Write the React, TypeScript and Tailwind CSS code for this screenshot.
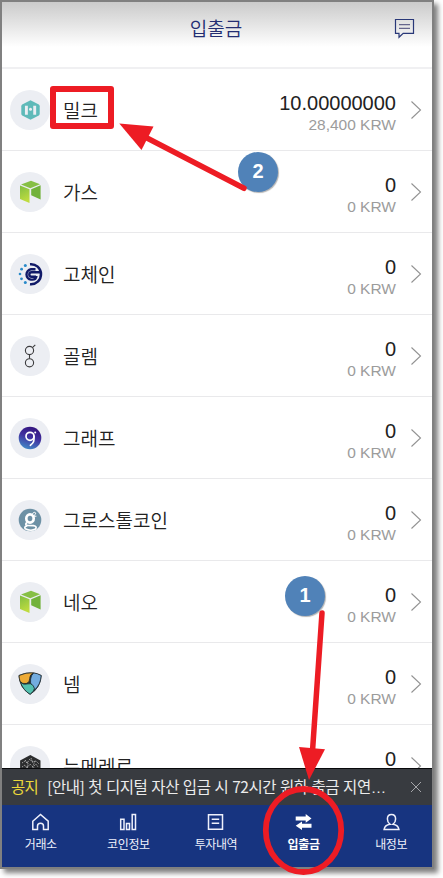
import type { ReactNode } from 'react';

const Milk = () => (
  <svg width="40" height="40" viewBox="0 0 40 40">
    <path d="M20.500 10.200l8.300 4.300q.9.600.9 1.800v7.400q0 1.200-.9 1.800l-8.300 4.300-8.300-4.300q-.9-.6-.9-1.800v-7.400q0-1.200.9-1.800z" fill="#5fbab9" />
    <path d="M16.400 15.700v9M24.700 15.700v9" stroke="#eceef3" strokeWidth="2.900" />
    <circle cx="20.500" cy="19.200" r="1.500" fill="#eceef3" />
  </svg>
);

const Neo = ({ id }: { id: string }) => (
  <svg width="40" height="40" viewBox="0 0 40 40">
    <defs>
      <linearGradient id={id} x1="0" y1="0" x2="0.3" y2="1">
        <stop offset="0" stopColor="#7fbd42" />
        <stop offset="1" stopColor="#bfdc3f" />
      </linearGradient>
    </defs>
    <path d="M10 13.400l9.500 3.800v13.800l-9.500-4z" fill={`url(#${id})`} />
    <path d="M11 12.600l10-3.800 9 3.400-9.700 4.100z" fill="#86bf45" />
    <path d="M21.200 17.300l9.400-4v14.200l-9.400-4.200z" fill="#72b23b" />
  </svg>
);

const GoChain = () => (
  <svg width="40" height="40" viewBox="0 0 40 40" fill="none">
    <path d="M20 10.200A10 10 0 0 1 31 20A10 10 0 0 1 20 30.200" stroke="#111a68" strokeWidth="2.500" />
    <path d="M30.500 18.300H21.500a2.200 2.200 0 0 0 0 4.400h4.500M25.500 15.300h-4.500a5.200 5.200 0 0 0 0 10.300h1.500q3.500 0 4-3.800" stroke="#111a68" strokeWidth="2.400" />
    <g fill="#298ac9">
      <circle cx="15.300" cy="11.500" r="1.500" />
      <circle cx="11.600" cy="15.200" r="1.400" />
      <circle cx="10" cy="20" r="1.300" />
      <circle cx="11.500" cy="24.800" r="1.400" />
      <circle cx="15.300" cy="28.600" r="1.500" />
    </g>
  </svg>
);

const Golem = () => (
  <svg width="40" height="40" viewBox="0 0 40 40" fill="none" stroke="#3b3b3d" strokeWidth="1.100">
    <circle cx="19.500" cy="14.500" r="4.100" />
    <circle cx="19.500" cy="26.800" r="4.100" />
    <path d="M19.500 18.600v4.100M22.400 11.700l2.900-2.800" />
  </svg>
);

const Graph = () => (
  <svg width="40" height="40" viewBox="0 0 40 40" fill="none">
    <defs>
      <linearGradient id="graph" x1=".65" y1="0" x2=".3" y2="1">
        <stop offset="0" stopColor="#33137c" />
        <stop offset=".45" stopColor="#40309f" />
        <stop offset="1" stopColor="#438cc8" />
      </linearGradient>
    </defs>
    <circle cx="20" cy="20" r="11.300" fill="url(#graph)" />
    <circle cx="20" cy="18.300" r="4" stroke="#fff" strokeWidth="1.700" />
    <path d="M24 18v3.500q0 2-1.500 3.800l-2.200 2" stroke="#fff" strokeWidth="1.600" strokeLinecap="round" />
    <circle cx="25.200" cy="14.500" r="1" fill="#fff" />
  </svg>
);

const Groestl = () => (
  <svg width="40" height="40" viewBox="0 0 40 40" fill="none">
    <circle cx="20" cy="20" r="11.300" fill="#6d91a5" />
    <g stroke="#fff">
      <ellipse cx="20" cy="18.500" rx="3.700" ry="4.100" strokeWidth="2.700" />
      <path d="M17 22.500q-2.700 2.200.5 2.800l6 .4q4 .8 2 3.300-4.500 2.600-10.300-.2-1.300-2.300 2-3" strokeWidth="1.700" />
      <path d="M22.300 14.200q1-2.200 2.500-2 1.600.7.400 2.300l-1.800 1.700h3" strokeWidth="1" />
    </g>
  </svg>
);

const Nem = () => (
  <svg width="40" height="40" viewBox="0 0 40 40" stroke="#1e292e" strokeWidth=".8" strokeLinejoin="round">
    <path d="M9 11.500q11-5.200 22.200 0-.6 12.500-11.100 18.800Q9.600 24 9 11.500z" fill="#263136" />
    <path d="M9 11.500q7-3.300 14.500-2.700-4 2-3.800 5.700.3 4-3.400 5-4 .8-6.200-2.100-1-3-1.100-5.900z" fill="#edaa35" />
    <path d="M23.800 8.900q4 .5 7.400 2.600-.5 9-6.700 14.600-.5-3-2.600-4.600-2-2-1.300-6.400.4-4 3.200-6.200z" fill="#73acdf" />
    <path d="M10.500 18.200q2.800 3 6.500 1.700 4-1.200 6.300 1.800 2 3 .2 5.300l-3.400 3.300q-7-4-9.600-12.100z" fill="#53c0af" />
  </svg>
);

const Numeraire = () => (
  <svg width="40" height="40" viewBox="0 0 40 40">
    <path d="M20.300 9l10.200 5.500v11.500l-10.200 5.500-10.200-5.500V14.500z" fill="#2b2c2d" />
    <path
      d="M12 17l3-2 2 2 3-4 2 3 4-1 3 3M12 21l3-2 2 3 3-4 3 3 3-3 2 3M15 14l3 3M21 12l2 5M25 15l-2 5M18 17l-1 6M13 25l4-4 3 4 3-4 5 4"
      fill="none"
      stroke="#bdbdbd"
      strokeWidth=".8"
      strokeDasharray="1.500 1"
    />
  </svg>
);

interface Coin {
  name: string;
  amount: string;
  krw: string;
  icon: ReactNode;
}

const coins: Coin[] = [
  { name: '밀크', amount: '10.00000000', krw: '28,400 KRW', icon: <Milk /> },
  { name: '가스', amount: '0', krw: '0 KRW', icon: <Neo id="gas" /> },
  { name: '고체인', amount: '0', krw: '0 KRW', icon: <GoChain /> },
  { name: '골렘', amount: '0', krw: '0 KRW', icon: <Golem /> },
  { name: '그래프', amount: '0', krw: '0 KRW', icon: <Graph /> },
  { name: '그로스톨코인', amount: '0', krw: '0 KRW', icon: <Groestl /> },
  { name: '네오', amount: '0', krw: '0 KRW', icon: <Neo id="neo" /> },
  { name: '넴', amount: '0', krw: '0 KRW', icon: <Nem /> },
  { name: '뉴메레르', amount: '0', krw: '0 KRW', icon: <Numeraire /> },
];

const CoinRow = ({ coin }: { coin: Coin }) => (
  <li className="flex h-[82px] shrink-0 items-center border-b border-[#e9e9eb] pl-2">
    <div className="flex size-10 shrink-0 items-center justify-center rounded-full bg-[#eceef3]">{coin.icon}</div>
    <span className="ml-[13px] flex-1 text-[19px] leading-6 font-[350] text-[#222]">{coin.name}</span>
    <div className="flex flex-col items-end pt-[7px] font-['Liberation_Sans',sans-serif]">
      <span className="text-[20px] leading-[23px] text-[#222]">{coin.amount}</span>
      <span className="text-[15.500px] leading-[20px] text-[#9c9c9c]">{coin.krw}</span>
    </div>
    <svg className="mr-[10px] ml-[14px]" width="12" height="20" viewBox="0 0 12 20" fill="none" stroke="#929292" strokeWidth="1.100">
      <path d="M1.500 1.500l9 8.500-9 8.500" />
    </svg>
  </li>
);

const tabs: { label: string; active?: boolean; icon: ReactNode }[] = [
  {
    label: '거래소',
    icon: <path d="M1.800 8.200L9.500 1.500l7.700 6.700v8.300h-4.700V13q0-2.800-3-2.800t-3 2.800v3.500H1.800z" />,
  },
  { label: '코인정보', icon: <path d="M1.700 6.200h3.300v10.300H1.700zM7.500 10.500h3v6h-3zM13.200 1.500h3.300v15h-3.300z" /> },
  { label: '투자내역', icon: <path d="M2.500 1.700h14v14.600h-14zM5.700 6.300h7.500M5.700 10.300h7.500" /> },
  {
    label: '입출금',
    active: true,
    icon: <path d="M1.700 3.400h10V.9l5.800 4.500-5.800 4.300V7.400h-10zM17.500 14.700H8V17l-6.300-4.300L8 8.500v2.300h9.500z" fill="#fff" stroke="none" />,
  },
  {
    label: '내정보',
    icon: <path d="M9.500 1.500q4.100 0 4.100 4.400 0 3.300-2.500 5.300 5 .7 5.800 5.300H2.100q.8-4.600 5.800-5.300-2.500-2-2.500-5.300 0-4.400 4.100-4.400z" />,
  },
];

export default function App() {
  return (
    <div className="relative h-[878px] w-[443px] overflow-hidden bg-white font-['Noto_Sans_CJK_KR',sans-serif]">
      <main className="flex h-[869px] w-[434px] flex-col overflow-hidden border-2 border-[#808080] bg-white shadow-[4px_4px_5px_rgba(0,0,0,0.5)]">
        <header className="flex h-[67px] shrink-0 border-b-2 border-[#f0f0f2] bg-linear-to-b from-[#cbcbcb] to-white to-[45px]">
          <div className="w-9" />
          <h1 className="flex-1 pt-3 text-center text-[19px] leading-[27px] font-[350] text-[#232d72]">입출금</h1>
          <svg className="mt-[15px] mr-[17px] w-[21px]" width="21" height="22" viewBox="0 0 21 22" fill="none" stroke="#293878" strokeWidth="1.200">
            <path d="M1.500 2.500h18v13.800H9.200L5 20.300v-4H1.500z" />
            <path d="M5 7.700h11M5 11.400h11" stroke="#65658c" />
          </svg>
        </header>
        <ul className="flex min-h-0 flex-1 flex-col overflow-hidden">
          {coins.map((coin) => (
            <CoinRow key={coin.name} coin={coin} />
          ))}
        </ul>
        <aside className="flex h-[37px] shrink-0 items-center border-t border-[#08090b] bg-[#383b40] pr-[9px] pl-[9px] text-[15.500px] text-[#ececec]">
          <span className="tracking-[-0.7px] text-[#ecd93b]">공지</span>
          <span className="ml-[9px] flex-1 tracking-[-0.45px] [word-spacing:0.9px] whitespace-nowrap">
            [안내] 첫 디지털 자산 입금 시 72시간 원화 출금 지연
            <span className="font-['Liberation_Sans',sans-serif]">…</span>
          </span>
          <svg width="14" height="14" viewBox="0 0 14 14" fill="none" stroke="#a5a6aa" strokeWidth="1">
            <path d="M2 2l10 10M12 2L2 12" />
          </svg>
        </aside>
        <nav className="-mr-[3px] -ml-[5px] flex h-[62px] shrink-0 bg-[#173480] text-[#eef0fb]">
          {tabs.map((tab) => (
            <div key={tab.label} className="flex flex-1 flex-col items-center pt-2">
              <svg width="19" height="18" viewBox="0 0 19 18" fill="none" stroke="currentColor" strokeWidth="1.500">
                {tab.icon}
              </svg>
              <span className={tab.active ? 'mt-1 text-[12px] leading-[18px] font-bold tracking-[-0.4px] text-white' : 'mt-1 text-[12px] leading-[18px] tracking-[-0.4px]'}>
                {tab.label}
              </span>
            </div>
          ))}
        </nav>
      </main>

      <div className="absolute top-[152px] left-[238px] flex size-10 items-center justify-center rounded-full bg-[#5082b8] pb-[2px] font-['Liberation_Sans',sans-serif] text-[20px] font-bold text-white shadow-[1px_1px_1px_rgba(0,0,0,0.3)]">
        2
      </div>
      <div className="absolute top-[576px] left-[285px] flex size-10 items-center justify-center rounded-full bg-[#5082b8] pb-[2px] font-['Liberation_Sans',sans-serif] text-[20px] font-bold text-white shadow-[1px_1px_1px_rgba(0,0,0,0.3)]">
        1
      </div>
      <svg className="pointer-events-none absolute inset-0" width="443" height="878" viewBox="0 0 443 878" fill="none" stroke="#ed1c24">
        <rect x="53" y="89" width="58" height="37" strokeWidth="6" strokeLinejoin="round" />
        <path d="M146 137.500L244 188.300" strokeWidth="5.500" strokeLinecap="round" />
        <path d="M119.300 123.500l34.200 3-12 23.500z" fill="#ed1c24" stroke="none" />
        <path d="M322 613L312.500 751" strokeWidth="5.500" strokeLinecap="round" />
        <path d="M299 747l26 2.300L309 780z" fill="#ed1c24" stroke="none" />
        <ellipse cx="303.500" cy="830.500" rx="37.700" ry="41.500" strokeWidth="5.800" />
      </svg>
    </div>
  );
}
